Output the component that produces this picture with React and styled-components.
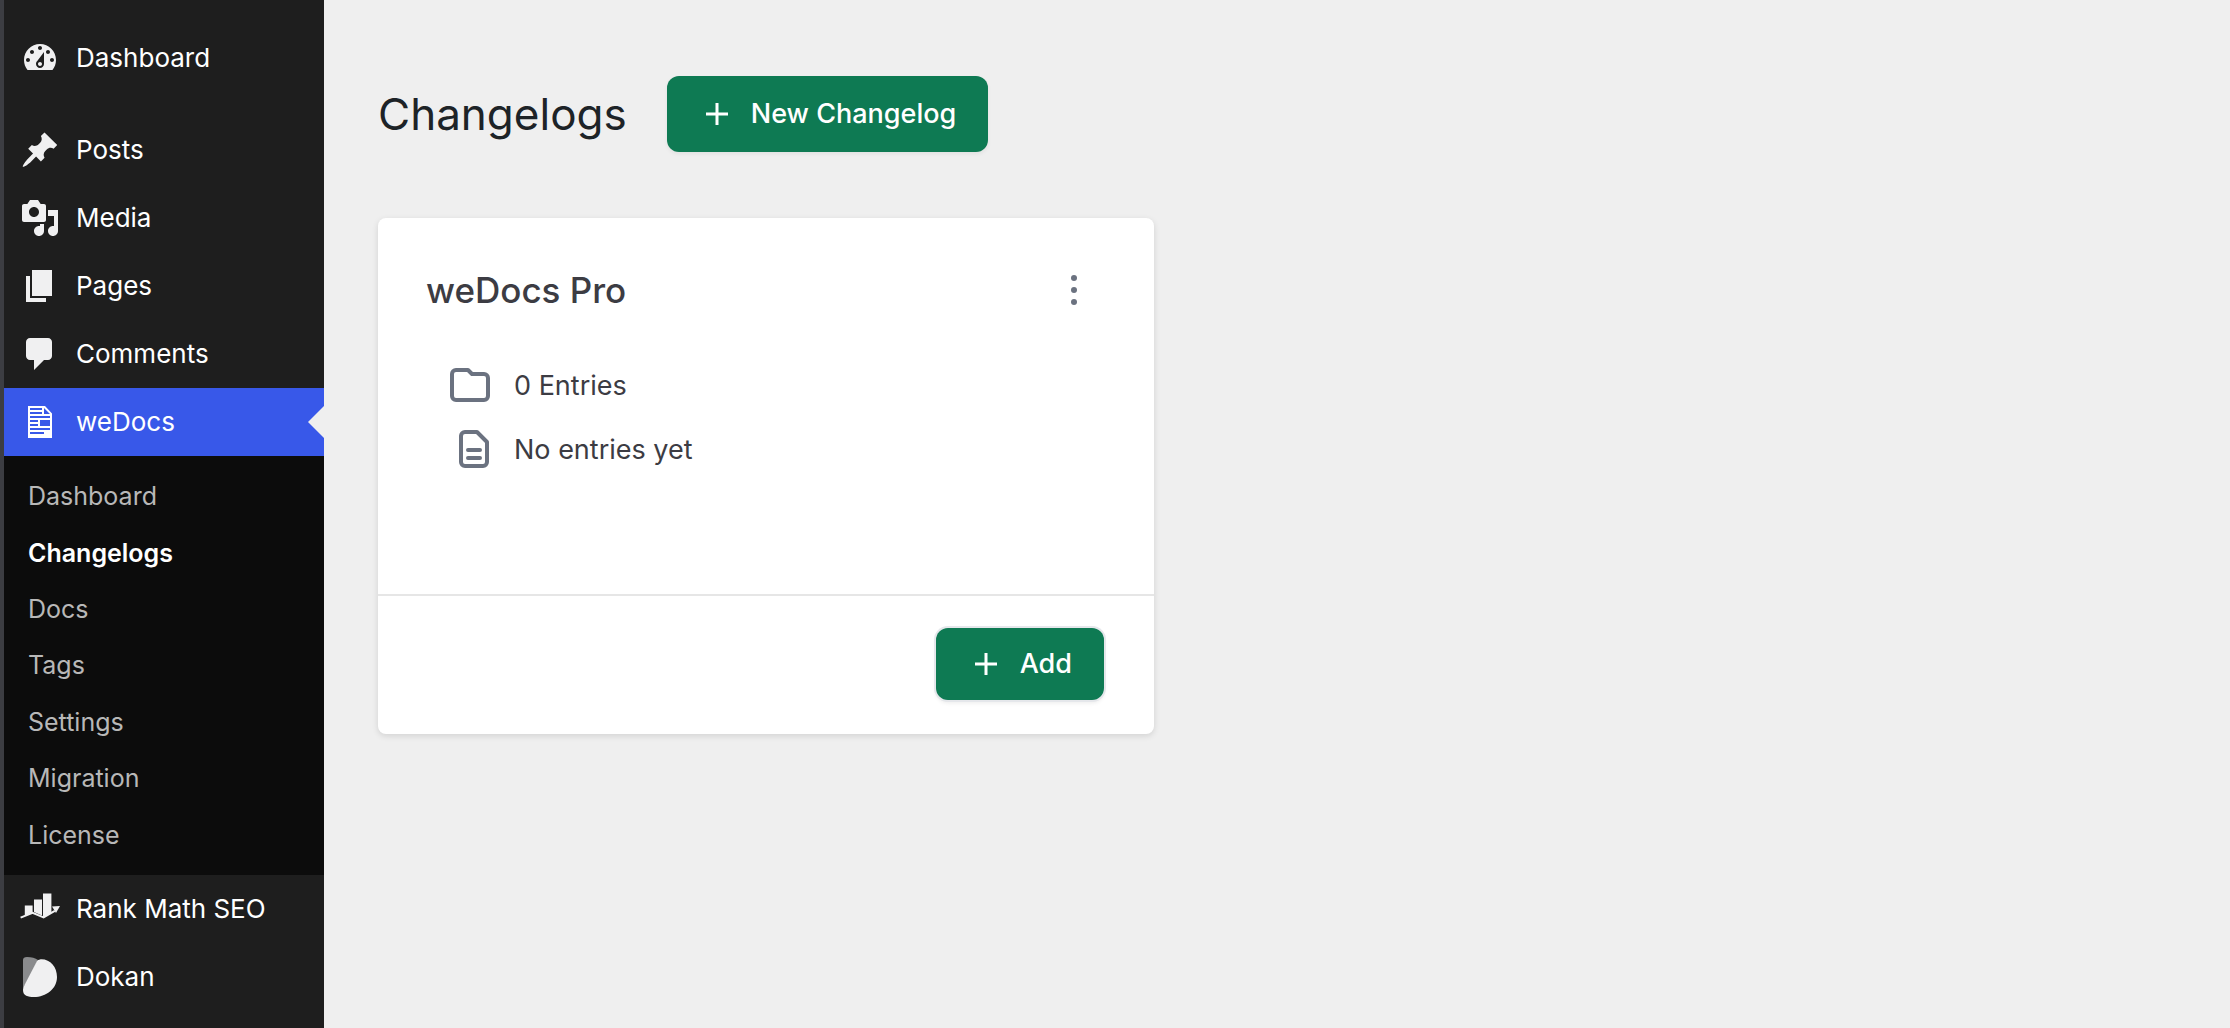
import React from "react";
import styled, { createGlobalStyle } from "styled-components";

const GlobalStyle = createGlobalStyle`
  *, *::before, *::after { box-sizing: border-box; }
  body {
    margin: 0;
    background: #efefef;
    font-family: Inter, Roboto, sans-serif;
    -webkit-font-smoothing: antialiased;
  }
  ul { list-style: none; margin: 0; padding: 0; }
  button { font-family: inherit; }
`;

const Layout = styled.div`
  display: grid;
  grid-template-columns: 324px minmax(0, 1fr);
  min-height: 100vh;
`;

const Sidebar = styled.nav`
  background: #1e1e1e;
  border-left: 4px solid #3c3d42;
  padding-top: 24px;
`;

const Separator = styled.li`
  height: 24px;
`;

const MenuLink = styled.a`
  position: relative;
  display: flex;
  align-items: center;
  gap: 16px;
  height: 68px;
  padding-left: 16px;
  font-size: 26px;
  line-height: 36px;
  color: #fff;
  text-decoration: none;
  background: ${(p) => (p.$active ? "#3858e9" : "transparent")};

  &::after {
    content: "";
    display: ${(p) => (p.$active ? "block" : "none")};
    position: absolute;
    right: 0;
    top: 18px;
    border: 16px solid transparent;
    border-left-width: 0;
    border-right-color: #efefef;
  }
`;

const MenuIcon = styled.svg`
  width: 40px;
  height: 40px;
  flex: none;
  fill: ${(p) => (p.$active ? "#fff" : "#f0f0f1")};
`;

const Submenu = styled.ul`
  display: grid;
  grid-auto-rows: 1fr;
  height: 419px;
  padding: 12px 0;
  background: #0c0c0c;
`;

const SubmenuItem = styled.li`
  display: flex;
  align-items: center;
`;

const SubmenuLink = styled.a`
  padding-left: 24px;
  font-size: 25px;
  line-height: 36px;
  font-weight: ${(p) => (p.$current ? 600 : 400)};
  color: ${(p) => (p.$current ? "#fff" : "#b8b8b8")};
  text-decoration: none;
`;

const Main = styled.main`
  padding: 76px 54px;
`;

const PageHeader = styled.header`
  display: flex;
  align-items: center;
  gap: 40px;
  margin-bottom: 66px;
`;

const PageTitle = styled.h1`
  margin: 0;
  font-size: 44px;
  line-height: 60px;
  font-weight: 400;
  color: #1d2327;
`;

const PrimaryButton = styled.button`
  display: inline-flex;
  align-items: center;
  gap: 16px;
  height: ${(p) => (p.$small ? 72 : 76)}px;
  padding: 0 32px;
  border: 0;
  border-radius: 12px;
  background: #0e7a53;
  color: #fff;
  font-size: 27px;
  line-height: 40px;
  font-weight: 500;
  box-shadow: ${(p) =>
    p.$small ? "0 0 0 2px #e5e7eb, 0 3px 4px rgba(0, 0, 0, 0.08)" : "0 2px 4px rgba(0, 0, 0, 0.06)"};
`;

const CardGrid = styled.div`
  display: grid;
  grid-template-columns: minmax(0, 776px);
`;

const Card = styled.article`
  background: #fff;
  border-radius: 8px;
  box-shadow: 0 2px 6px rgba(0, 0, 0, 0.12);
`;

const CardBody = styled.div`
  min-height: 376px;
  padding: 48px;
`;

const CardHeader = styled.div`
  display: flex;
  align-items: center;
  justify-content: space-between;
  height: 48px;
  margin-bottom: 52px;
`;

const CardTitle = styled.h2`
  margin: 0;
  font-size: 35px;
  line-height: 48px;
  font-weight: 500;
  color: #3c3c43;
`;

const IconButton = styled.button`
  display: flex;
  padding: 0 12px;
  border: 0;
  background: none;
  color: #6b7280;
`;

const Facts = styled.ul`
  display: grid;
  gap: 24px;
  padding-left: 20px;
`;

const Fact = styled.li`
  display: flex;
  align-items: center;
  gap: 20px;
  height: 40px;
  font-size: 27px;
  line-height: 40px;
  color: #3c3c43;
`;

const FactIcon = styled.svg`
  width: 48px;
  height: 48px;
  fill: none;
  stroke: #6b7280;
  stroke-width: 4;
  stroke-linecap: round;
  stroke-linejoin: round;
`;

const CardFooter = styled.footer`
  display: flex;
  justify-content: flex-end;
  padding: 32px 50px 34px;
  border-top: 2px solid #e6e6e6;
`;

const PlusIcon = () => (
  <svg width="36" height="36" viewBox="0 0 36 36" fill="none" stroke="currentColor" strokeWidth="3" aria-hidden="true">
    <path d="M18 7v22M7 18h22" />
  </svg>
);

const icons = {
  dashboard: (
    <path d="M3.76 16h12.48c1.1-1.37 1.76-3.11 1.76-5 0-4.42-3.58-8-8-8s-8 3.58-8 8c0 1.89.66 3.63 1.76 5zM10 4c.55 0 1 .45 1 1s-.45 1-1 1-1-.45-1-1 .45-1 1-1zM6 6c.55 0 1 .45 1 1s-.45 1-1 1-1-.45-1-1 .45-1 1-1zm8 0c.55 0 1 .45 1 1s-.45 1-1 1-1-.45-1-1 .45-1 1-1zm-5.37 5.55L12 7v6c0 1.1-.9 2-2 2s-2-.9-2-2c0-.57.24-1.08.63-1.45zM4 10c.55 0 1 .45 1 1s-.45 1-1 1-1-.45-1-1 .45-1 1-1zm12 0c.55 0 1 .45 1 1s-.45 1-1 1-1-.45-1-1 .45-1 1-1zm-5 3c0-.55-.45-1-1-1s-1 .45-1 1 .45 1 1 1 1-.45 1-1z" fillRule="evenodd" />
  ),
  posts: (
    <path d="M10.44 3.02l1.82-1.82 6.36 6.35-1.83 1.82c-1.05-.68-2.48-.57-3.41.36l-.75.75c-.92.93-1.04 2.35-.35 3.41l-1.83 1.82-2.41-2.41-2.8 2.79c-.42.42-3.38 2.71-3.8 2.29s1.86-3.39 2.28-3.81l2.79-2.79L4.1 9.36l1.83-1.82c1.05.69 2.48.57 3.4-.36l.75-.75c.93-.92 1.05-2.35.36-3.41z" />
  ),
  media: (
    <path d="M13 11V4c0-.55-.45-1-1-1h-1.67L9 1H5L3.67 3H2c-.55 0-1 .45-1 1v7c0 .55.45 1 1 1h10c.55 0 1-.45 1-1zM7 4.5c1.38 0 2.5 1.12 2.5 2.5S8.38 9.5 7 9.5 4.5 8.38 4.5 7 5.62 4.5 7 4.5zM14 6h5v10.5c0 1.38-1.12 2.5-2.5 2.5S14 17.88 14 16.5s1.12-2.5 2.5-2.5c.17 0 .34.02.5.05V9h-3V6zm-4 8.05V13h2v3.5c0 1.38-1.12 2.5-2.5 2.5S7 17.88 7 16.5 8.12 14 9.5 14c.17 0 .34.02.5.05z" fillRule="evenodd" />
  ),
  pages: <path d="M6 15V2h10v13H6zm-1 1h8v2H3V5h2v11z" />,
  comments: (
    <path d="M5 2h9c1.1 0 2 .9 2 2v7c0 1.1-.9 2-2 2h-2l-5 5v-5H5c-1.1 0-2-.9-2-2V4c0-1.1.9-2 2-2z" />
  ),
  wedocs: (
    <path
      fillRule="evenodd"
      d="M4 2h8.5L16 5.700V18H4zM5 3v1h6V3zM5 5v1h6V5zM12 3v3h3zM5 7v1h10V7zM5 9v1h4V9zM10 9v3h5V9zM5 11v1h4v-1zM5 13v1h10v-1zM5 15v1h7v-1z"
    />
  ),
  rankmath: (
    <>
      <path d="M2.400 8.300H6.300V11.700L2.400 13.400zM7 5.300H11V13.200L7 11.500zM11.500 2.200H15.700V12L11.500 14.200z" />
      <path d="M.300 14.300L6.300 11.900L11.800 14.200L17.400 10.900" fill="none" stroke="#f0f0f1" strokeWidth="1" />
      <path d="M16 8.800L20 8.500L18 12z" />
    </>
  ),
  dokan: (
    <>
      <path d="M1.500 1.500Q1.500 0 3.500 0Q7 0 9 1.500L1.500 16z" fill="#8a8b8d" />
      <path d="M10 1.200C15 .8 18.500 5 18.500 10C18.500 16 13 20 7 20C4 20 1.500 19.500 1.500 16.500Q1.500 15.500 2.500 13.500L8.500 2Q9 1.200 10 1.200z" />
    </>
  ),
};

const menu = [
  { label: "Dashboard", icon: "dashboard" },
  { separator: true },
  { label: "Posts", icon: "posts" },
  { label: "Media", icon: "media" },
  { label: "Pages", icon: "pages" },
  { label: "Comments", icon: "comments" },
  {
    label: "weDocs",
    icon: "wedocs",
    active: true,
    children: ["Dashboard", "Changelogs", "Docs", "Tags", "Settings", "Migration", "License"],
  },
  { label: "Rank Math SEO", icon: "rankmath" },
  { label: "Dokan", icon: "dokan" },
];

export default function App() {
  return (
    <>
      <GlobalStyle />
      <Layout>
        <Sidebar aria-label="Main menu">
          <ul>
            {menu.map((item, i) =>
              item.separator ? (
                <Separator key={i} role="separator" />
              ) : (
                <li key={i}>
                  <MenuLink href="#" $active={item.active}>
                    <MenuIcon viewBox="0 0 20 20" $active={item.active} aria-hidden="true">
                      {icons[item.icon]}
                    </MenuIcon>
                    {item.label}
                  </MenuLink>
                  {item.children && (
                    <Submenu>
                      {item.children.map((label) => (
                        <SubmenuItem key={label}>
                          <SubmenuLink href="#" $current={label === "Changelogs"}>
                            {label}
                          </SubmenuLink>
                        </SubmenuItem>
                      ))}
                    </Submenu>
                  )}
                </li>
              )
            )}
          </ul>
        </Sidebar>
        <Main>
          <PageHeader>
            <PageTitle>Changelogs</PageTitle>
            <PrimaryButton type="button">
              <PlusIcon />
              New Changelog
            </PrimaryButton>
          </PageHeader>
          <CardGrid>
            <Card>
              <CardBody>
                <CardHeader>
                  <CardTitle>weDocs Pro</CardTitle>
                  <IconButton type="button" aria-label="Changelog options">
                    <svg width="40" height="40" viewBox="0 0 40 40" fill="currentColor" aria-hidden="true">
                      <circle cx="20" cy="8" r="3" />
                      <circle cx="20" cy="20" r="3" />
                      <circle cx="20" cy="32" r="3" />
                    </svg>
                  </IconButton>
                </CardHeader>
                <Facts>
                  <Fact>
                    <FactIcon viewBox="0 0 48 48" aria-hidden="true">
                      <path d="M6 34V12a4 4 0 0 1 4-4h12l4 4h12a4 4 0 0 1 4 4v18a4 4 0 0 1-4 4H10a4 4 0 0 1-4-4z" />
                    </FactIcon>
                    0 Entries
                  </Fact>
                  <Fact>
                    <FactIcon viewBox="0 0 48 48" aria-hidden="true">
                      <path d="M15 36V10a4 4 0 0 1 4-4h12l10 10v20a4 4 0 0 1-4 4H19a4 4 0 0 1-4-4zM22 24h12M22 32h12" />
                    </FactIcon>
                    No entries yet
                  </Fact>
                </Facts>
              </CardBody>
              <CardFooter>
                <PrimaryButton type="button" $small>
                  <PlusIcon />
                  Add
                </PrimaryButton>
              </CardFooter>
            </Card>
          </CardGrid>
        </Main>
      </Layout>
    </>
  );
}
